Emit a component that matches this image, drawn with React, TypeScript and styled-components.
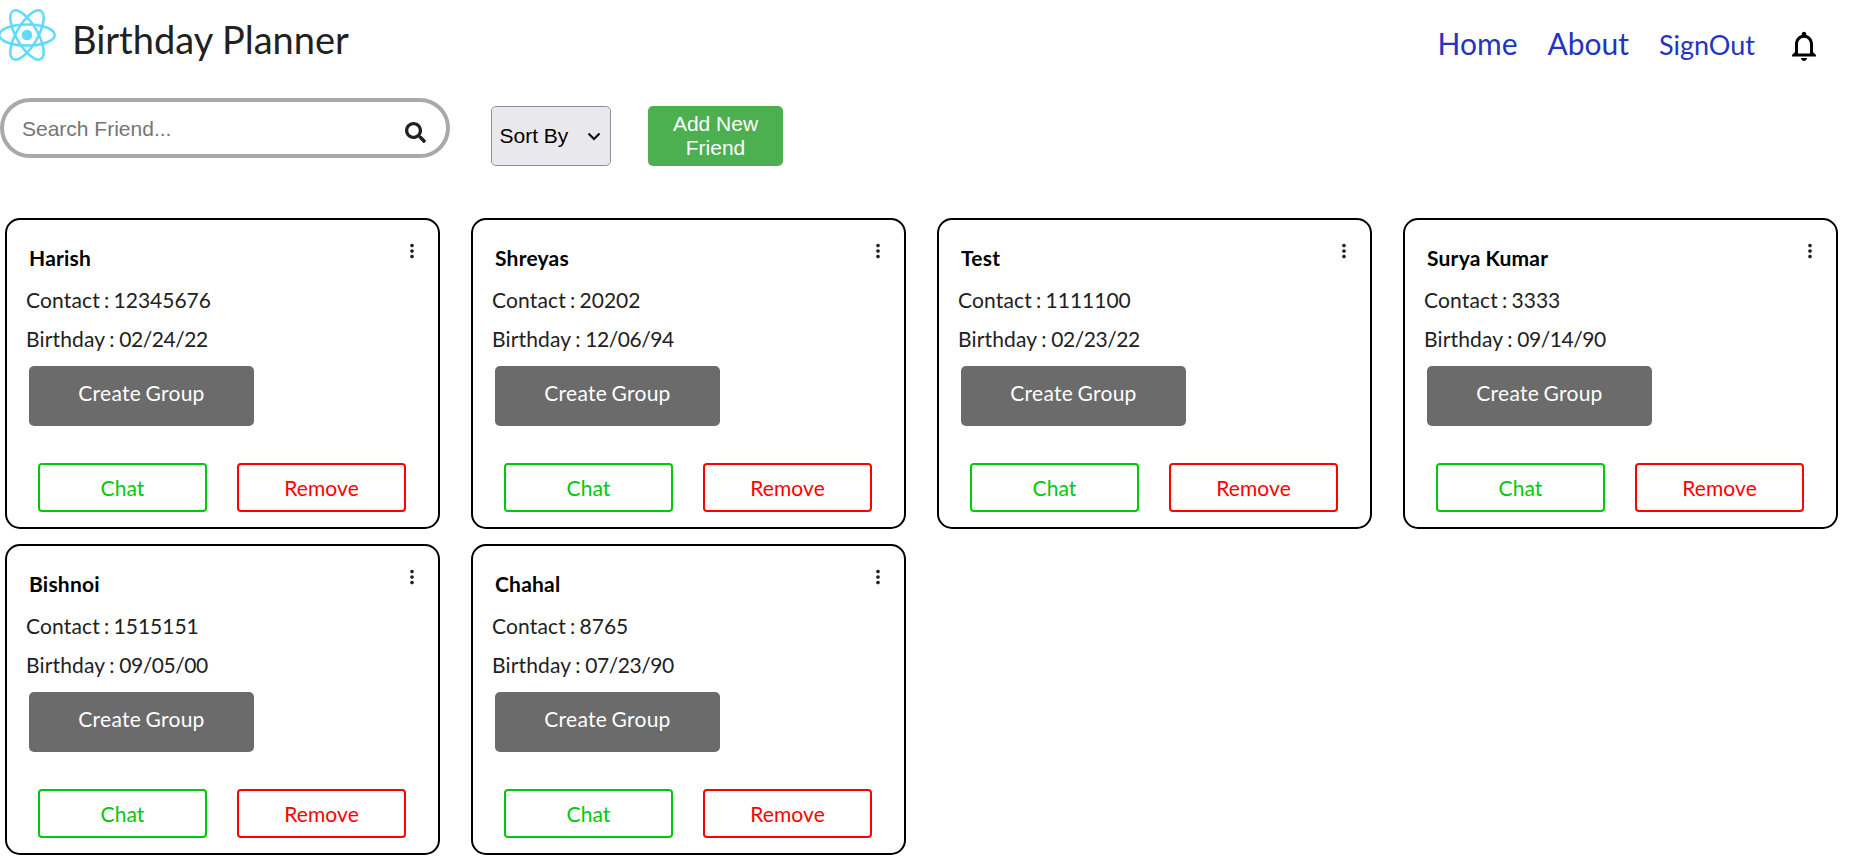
import React from 'react';
import styled, { createGlobalStyle } from 'styled-components';
import { MdMoreVert, MdNotificationsNone } from 'react-icons/md';
import { FaSearch } from 'react-icons/fa';

const Global = createGlobalStyle`
  * { box-sizing: border-box; }
  html, body { margin: 0; background: #fff; overflow: hidden; }
  body { font-family: Lato, sans-serif; font-size: 21px; color: #212121; }
  button, input { font-family: "Liberation Sans", Arial, sans-serif; margin: 0; }
`;

const Header = styled.header`
  display: flex;
  height: 98px;
  padding-right: 31px;
`;

const Logo = styled.svg`
  width: 58px;
  height: 52px;
  margin: 9px 0 0 -2px;
  flex: none;
`;

const Title = styled.h1`
  margin: 11px 0 0 16px;
  font-weight: 400;
  font-size: 38px;
  line-height: 56px;
`;

const Nav = styled.nav`
  margin-left: auto;
  display: flex;
  align-items: baseline;
  height: 60px;
  padding-top: 24px;
  line-height: 38px;
`;

const NavLink = styled.a<{ $small?: boolean }>`
  color: #2334c0;
  font-size: ${(p) => (p.$small ? 27 : 30)}px;
  margin-right: ${(p) => (p.$small ? 31 : 30)}px;
  text-decoration: none;
`;

const Bell = styled.span`
  align-self: flex-start;
  display: flex;
  margin-top: 4px;
  color: #000;
`;

const Toolbar = styled.div`
  display: flex;
  height: 120px;
`;

const SearchBox = styled.div`
  display: flex;
  align-items: center;
  width: 450px;
  height: 60px;
  padding: 0 20px 0 18px;
  border: 4px solid #a9a9a9;
  border-radius: 30px;
`;

const SearchInput = styled.input`
  flex: 1;
  min-width: 0;
  border: 0;
  outline: 0;
  padding: 2px 0 0;
  background: none;
  font-size: 21px;
  &::placeholder { color: #757575; }
`;

const SearchIcon = styled.span`
  display: flex;
  margin-top: 9px;
`;

const SortSelect = styled.button`
  display: flex;
  align-items: center;
  justify-content: space-between;
  width: 120px;
  height: 60px;
  margin: 8px 0 0 41px;
  padding: 0 9px 0 7.5px;
  border: 1px solid #8f8f9d;
  border-radius: 5px;
  background: #e9e9ed;
  color: #000;
  font-size: 21px;
`;

const AddButton = styled.button`
  width: 135px;
  height: 60px;
  margin: 8px 0 0 37px;
  padding: 0 20px;
  border: 0;
  border-radius: 5px;
  background: #4caf50;
  color: #fff;
  font-size: 21px;
  line-height: 24px;
`;

const Grid = styled.main`
  display: grid;
  grid-template-columns: repeat(4, 435px);
  gap: 15px 31px;
  padding-left: 5px;
`;

const Card = styled.article`
  display: flex;
  flex-direction: column;
  align-items: flex-start;
  height: 311px;
  padding: 20px 15px 0 19px;
  border: 2px solid #000;
  border-radius: 15px;
`;

const CardHead = styled.div`
  display: flex;
  justify-content: space-between;
  width: 100%;
  height: 40px;
`;

const Name = styled.h2`
  margin: 3px 0 0 3px;
  font-size: 21px;
  font-weight: 700;
  line-height: 30px;
  letter-spacing: 0.22px;
  word-spacing: -0.5px;
  color: #000;
`;

const Dots = styled.span`
  display: flex;
`;

const Detail = styled.p<{ $gap: number }>`
  margin: 0;
  line-height: 39px;
  letter-spacing: 0.15px;
  word-spacing: ${(p) => p.$gap}px;
`;

const Value = styled.span<{ $spacing?: number }>`
  letter-spacing: ${(p) => p.$spacing ?? 0}px;
`;

const GroupButton = styled.button`
  width: 225px;
  height: 60px;
  margin: 8px 0 0 3px;
  padding: 0 0 8px;
  border: 0;
  border-radius: 5px;
  background: #6b6b6b;
  color: #fff;
  font-family: Lato, sans-serif;
  font-size: 21px;
  letter-spacing: 0.25px;
  word-spacing: -1px;
`;

const Actions = styled.div`
  display: flex;
  gap: 30px;
  margin: 37px 0 0 12px;
`;

const ActionButton = styled.button<{ $color: string }>`
  width: 169px;
  height: 49px;
  padding: 0;
  border: 2px solid ${(p) => p.$color};
  border-radius: 4px;
  background: #fff;
  color: ${(p) => p.$color};
  font-family: Lato, sans-serif;
  font-size: 21px;
  letter-spacing: 0.1px;
`;

const friends = [
  { name: 'Harish', contact: '12345676', birthday: '02/24/22' },
  { name: 'Shreyas', contact: '20202', birthday: '12/06/94' },
  { name: 'Test', contact: '1111100', birthday: '02/23/22' },
  { name: 'Surya Kumar', contact: '3333', birthday: '09/14/90' },
  { name: 'Bishnoi', contact: '1515151', birthday: '09/05/00' },
  { name: 'Chahal', contact: '8765', birthday: '07/23/90' },
];

export default function App() {
  return (
    <>
      <Global />
      <Header>
        <Logo viewBox="-11.5 -10.23 23 20.46">
          <circle r="2.1" fill="#61dafb" />
          <g stroke="#61dafb" strokeWidth="1" fill="none">
            <ellipse rx="11" ry="4.2" />
            <ellipse rx="11" ry="4.2" transform="rotate(60)" />
            <ellipse rx="11" ry="4.2" transform="rotate(120)" />
          </g>
        </Logo>
        <Title>Birthday Planner</Title>
        <Nav>
          <NavLink>Home</NavLink>
          <NavLink>About</NavLink>
          <NavLink $small>SignOut</NavLink>
          <Bell><MdNotificationsNone size={36} /></Bell>
        </Nav>
      </Header>
      <Toolbar>
        <SearchBox>
          <SearchInput placeholder="Search Friend..." />
          <SearchIcon><FaSearch size={21} /></SearchIcon>
        </SearchBox>
        <SortSelect>
          Sort By
          <svg width="14" height="9" viewBox="0 0 14 9" fill="none" stroke="#000" strokeWidth="2">
            <path d="M1.5 1.5 7 7l5.500-5.500" />
          </svg>
        </SortSelect>
        <AddButton>Add New Friend</AddButton>
      </Toolbar>
      <Grid>
        {friends.map((f) => (
          <Card key={f.name}>
            <CardHead>
              <Name>{f.name}</Name>
              <Dots><MdMoreVert size={22} /></Dots>
            </CardHead>
            <Detail $gap={-1.4}>Contact : <Value>{f.contact}</Value></Detail>
            <Detail $gap={-1}>Birthday : <Value $spacing={-0.45}>{f.birthday}</Value></Detail>
            <GroupButton>Create Group</GroupButton>
            <Actions>
              <ActionButton $color="#00c80a">Chat</ActionButton>
              <ActionButton $color="#ff0000">Remove</ActionButton>
            </Actions>
          </Card>
        ))}
      </Grid>
    </>
  );
}
